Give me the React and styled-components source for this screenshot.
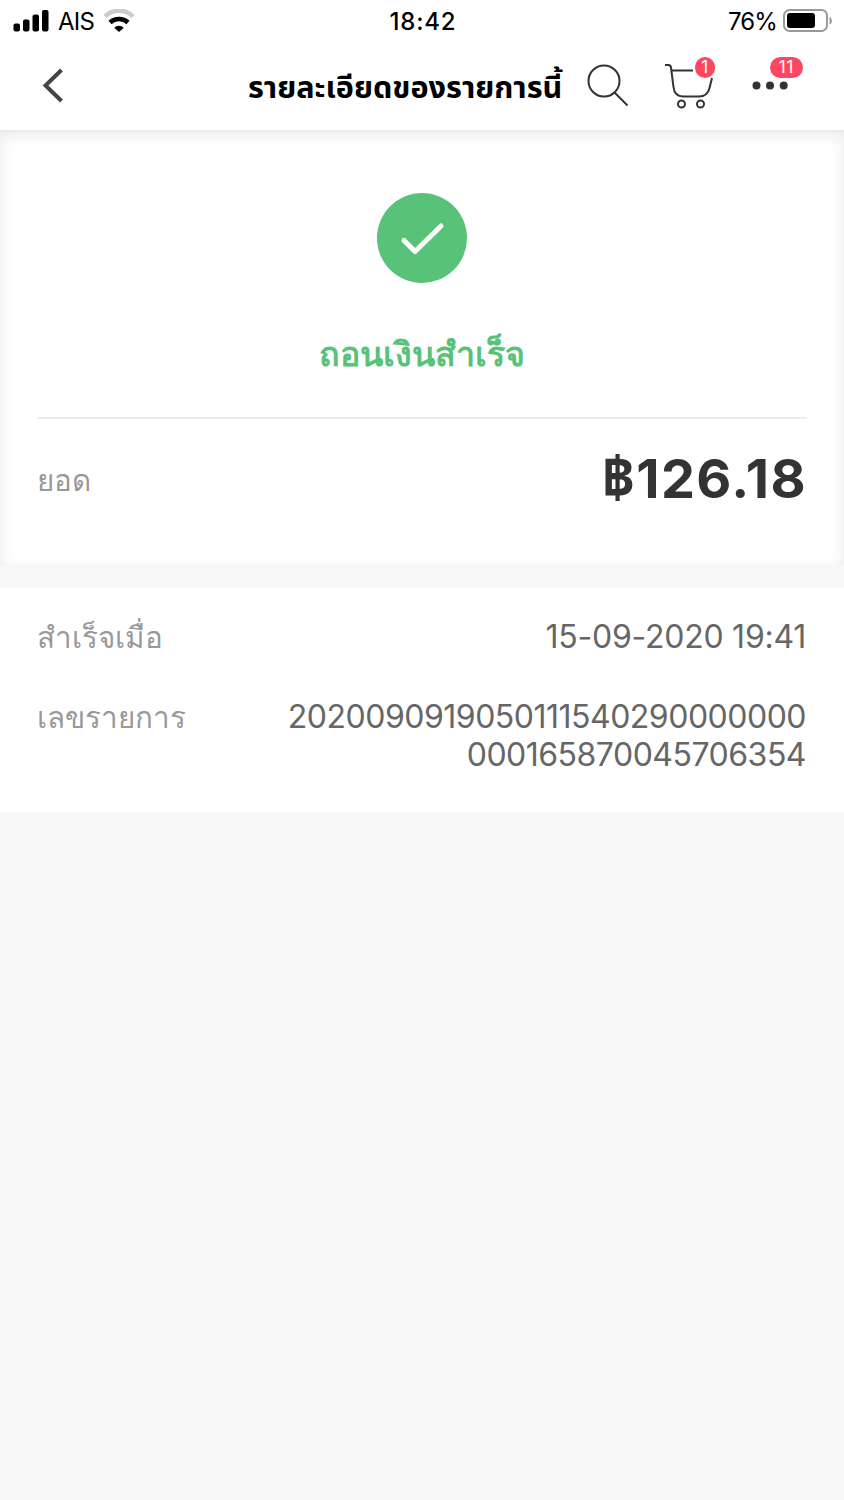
import React from "react";
import styled, { createGlobalStyle } from "styled-components";

const GlobalStyle = createGlobalStyle`
  * {
    box-sizing: border-box;
  }
  body {
    margin: 0;
    background-color: #f8f8f8;
    font-family: Inter, sans-serif;
  }
`;

const Container = styled.div`
  width: 844px;
  min-height: 1500px;
  background-color: #f8f8f8;
`;

const Header = styled.header`
  height: 130px;
  background-color: white;
`;

const StatusBar = styled.div`
  display: grid;
  grid-template-columns: 1fr auto 1fr;
  align-items: center;
  height: 42px;
  padding: 0 11px 0 13px;
  font-size: 24px;
  color: black;
`;

const StatusSide = styled.div`
  display: flex;
  align-items: center;
  justify-content: ${props => (props.$end ? "flex-end" : "flex-start")};
  gap: ${props => (props.$end ? "6px" : "9px")};
  svg {
    display: block;
  }
`;

const StatusText = styled.span`
  line-height: 30px;
  padding-top: 2px;
  letter-spacing: ${props => props.$spacing || "0"};
`;

const Clock = styled(StatusText)`
  font-weight: 550;
`;

const NavBar = styled.nav`
  display: flex;
  align-items: center;
  height: 88px;
  padding: 0 40px;
`;

const IconButton = styled.div`
  position: relative;
  flex: none;
  width: ${props => props.$width}px;
  height: 48px;
  margin-left: ${props => props.$gap || 0}px;
  svg {
    display: block;
  }
`;

const Title = styled.h1`
  flex: none;
  margin: 0 0 0 184px;
  width: 314px;
  padding-top: 5px;
  font-family: "Noto Sans Thai", "Noto Sans", sans-serif;
  font-size: 30.6px;
  font-weight: 700;
  line-height: 48px;
  white-space: nowrap;
  color: black;
`;

const Badge = styled.span`
  position: absolute;
  top: -5px;
  left: ${props => props.$left}px;
  width: ${props => props.$width}px;
  height: 21px;
  border-radius: 11px;
  background-color: #ff4661;
  color: white;
  font-size: 17px;
  line-height: 20px;
  letter-spacing: 0.8px;
  text-align: center;
`;

const Summary = styled.section`
  height: 435px;
  padding: 63px 37px 0;
  background-color: white;
  box-shadow: inset 0 2px 0 rgba(0, 0, 0, 0.02),
    inset 0 5px 14px 1px rgba(0, 0, 0, 0.08);
`;

const Result = styled.div`
  display: flex;
  flex-direction: column;
  align-items: center;
  height: 226px;
  border-bottom: 2px solid #ededed;
`;

const ResultText = styled.div`
  margin-top: 45px;
  font-size: 34px;
  font-weight: 600;
  line-height: 52px;
  white-space: nowrap;
  color: #57c278;
`;

const AmountRow = styled.div`
  display: flex;
  justify-content: space-between;
  align-items: center;
  height: 120px;
`;

const Label = styled.div`
  padding-top: 1px;
  font-size: 29.6px;
  line-height: 38px;
  white-space: nowrap;
  color: #999;
`;

const Amount = styled.div`
  padding-bottom: 6px;
  font-size: 54px;
  font-weight: 700;
  line-height: 60px;
  letter-spacing: 1.4px;
  color: #333;
`;

const Currency = styled.span`
  font-family: "Noto Sans Thai Looped", "Noto Sans", sans-serif;
  font-size: 58px;
  line-height: 1;
`;

const Details = styled.section`
  display: flex;
  flex-direction: column;
  gap: 40px;
  height: 224px;
  margin-top: 23px;
  padding: 29px 38px 0 37px;
  background-color: white;
`;

const DetailRow = styled.div`
  display: flex;
  justify-content: space-between;
`;

const Value = styled.div`
  padding-top: 1px;
  font-size: 32px;
  line-height: 38.5px;
  letter-spacing: ${props => props.$spacing};
  text-align: right;
  white-space: nowrap;
  color: #666;
`;

const Signal = () => (
  <svg width="36" height="24" viewBox="0 0 36 24">
    <rect x="0.5" y="14.5" width="6.5" height="8" rx="2" />
    <rect x="10" y="10.5" width="6.5" height="12" rx="2" />
    <rect x="19.5" y="5.5" width="6.5" height="17" rx="2" />
    <rect x="29" y="1" width="6.5" height="21.5" rx="2" />
  </svg>
);

const Wifi = () => (
  <svg width="32" height="24" viewBox="0 0 32 24" fill="none">
    <path d="M2 7.500a20 20 0 0 1 28 0" stroke="#ccc" strokeWidth="4.500" />
    <path d="M7 13.500a13.200 13.200 0 0 1 18 0" stroke="black" strokeWidth="4.600" />
    <path d="M11.200 18.700a7.200 7.200 0 0 1 9.600 0L16 23z" fill="black" />
  </svg>
);

const Battery = () => (
  <svg width="50" height="24" viewBox="0 0 50 24" fill="none">
    <rect x="1" y="1" width="43" height="21" rx="5.5" stroke="#999" strokeWidth="2" />
    <rect x="4" y="4" width="28" height="15" rx="3" fill="black" />
    <path d="M46.500 8c3.200 1 3.200 6.500 0 7.500z" fill="#999" />
  </svg>
);

const BackIcon = () => (
  <svg width="26" height="48" viewBox="0 0 26 48" fill="none">
    <path d="M21.500 8L5.500 23.500L21.500 39" stroke="#444" strokeWidth="4" />
  </svg>
);

const SearchIcon = () => (
  <svg width="42" height="48" viewBox="0 0 42 48" fill="none" stroke="#333" strokeWidth="2">
    <circle cx="17" cy="19" r="15.500" />
    <path d="M27.500 30.500L40.500 43.500" />
  </svg>
);

const CartIcon = () => (
  <svg width="52" height="48" viewBox="0 0 52 48" fill="none" stroke="#333" strokeWidth="2">
    <path d="M1 3H4.500Q6.500 3 7 5.500L9.500 25Q10.500 34.500 19 34.500H35Q43.500 34.500 45.500 26L48 16" />
    <path d="M7.500 8.500H29" />
    <circle cx="17.500" cy="42" r="3.500" />
    <circle cx="36.500" cy="42" r="3.500" />
  </svg>
);

const MoreIcon = () => (
  <svg width="36" height="48" viewBox="0 0 36 48" fill="#333">
    <circle cx="4.500" cy="23.500" r="4" />
    <circle cx="18" cy="23.500" r="4" />
    <circle cx="31.700" cy="23.500" r="4" />
  </svg>
);

const SuccessIcon = () => (
  <svg width="90" height="90" viewBox="0 0 90 90" fill="none">
    <circle cx="45" cy="45" r="45" fill="#57c278" />
    <path
      d="M27 47.500L38 58.500L64 33"
      stroke="white"
      strokeWidth="5"
      strokeLinecap="round"
      strokeLinejoin="round"
    />
  </svg>
);

const App = () => {
  return (
    <Container>
      <GlobalStyle />
      <Header>
        <StatusBar>
          <StatusSide>
            <Signal />
            <StatusText $spacing="-0.8px">AIS</StatusText>
            <Wifi />
          </StatusSide>
          <Clock $spacing="0.8px">18:42</Clock>
          <StatusSide $end>
            <StatusText $spacing="-0.9px">76%</StatusText>
            <Battery />
          </StatusSide>
        </StatusBar>
        <NavBar>
          <IconButton $width={24}>
            <BackIcon />
          </IconButton>
          <Title>รายละเอียดของรายการนี้</Title>
          <IconButton $width={42} $gap={25}>
            <SearchIcon />
          </IconButton>
          <IconButton $width={52} $gap={35}>
            <CartIcon />
            <Badge $left={31} $width={20}>
              1
            </Badge>
          </IconButton>
          <IconButton $width={36} $gap={36}>
            <MoreIcon />
            <Badge $left={18} $width={33}>
              11
            </Badge>
          </IconButton>
        </NavBar>
      </Header>
      <Summary>
        <Result>
          <SuccessIcon />
          <ResultText>ถอนเงินสำเร็จ</ResultText>
        </Result>
        <AmountRow>
          <Label>ยอด</Label>
          <Amount>
            <Currency>฿</Currency>126.18
          </Amount>
        </AmountRow>
      </Summary>
      <Details>
        <DetailRow>
          <Label>สำเร็จเมื่อ</Label>
          <Value $spacing="-0.25px">15-09-2020 19:41</Value>
        </DetailRow>
        <DetailRow>
          <Label>เลขรายการ</Label>
          <Value $spacing="-0.5px">
            <div>2020090919050111540290000000</div>
            <div>000165870045706354</div>
          </Value>
        </DetailRow>
      </Details>
    </Container>
  );
};

export default App;
